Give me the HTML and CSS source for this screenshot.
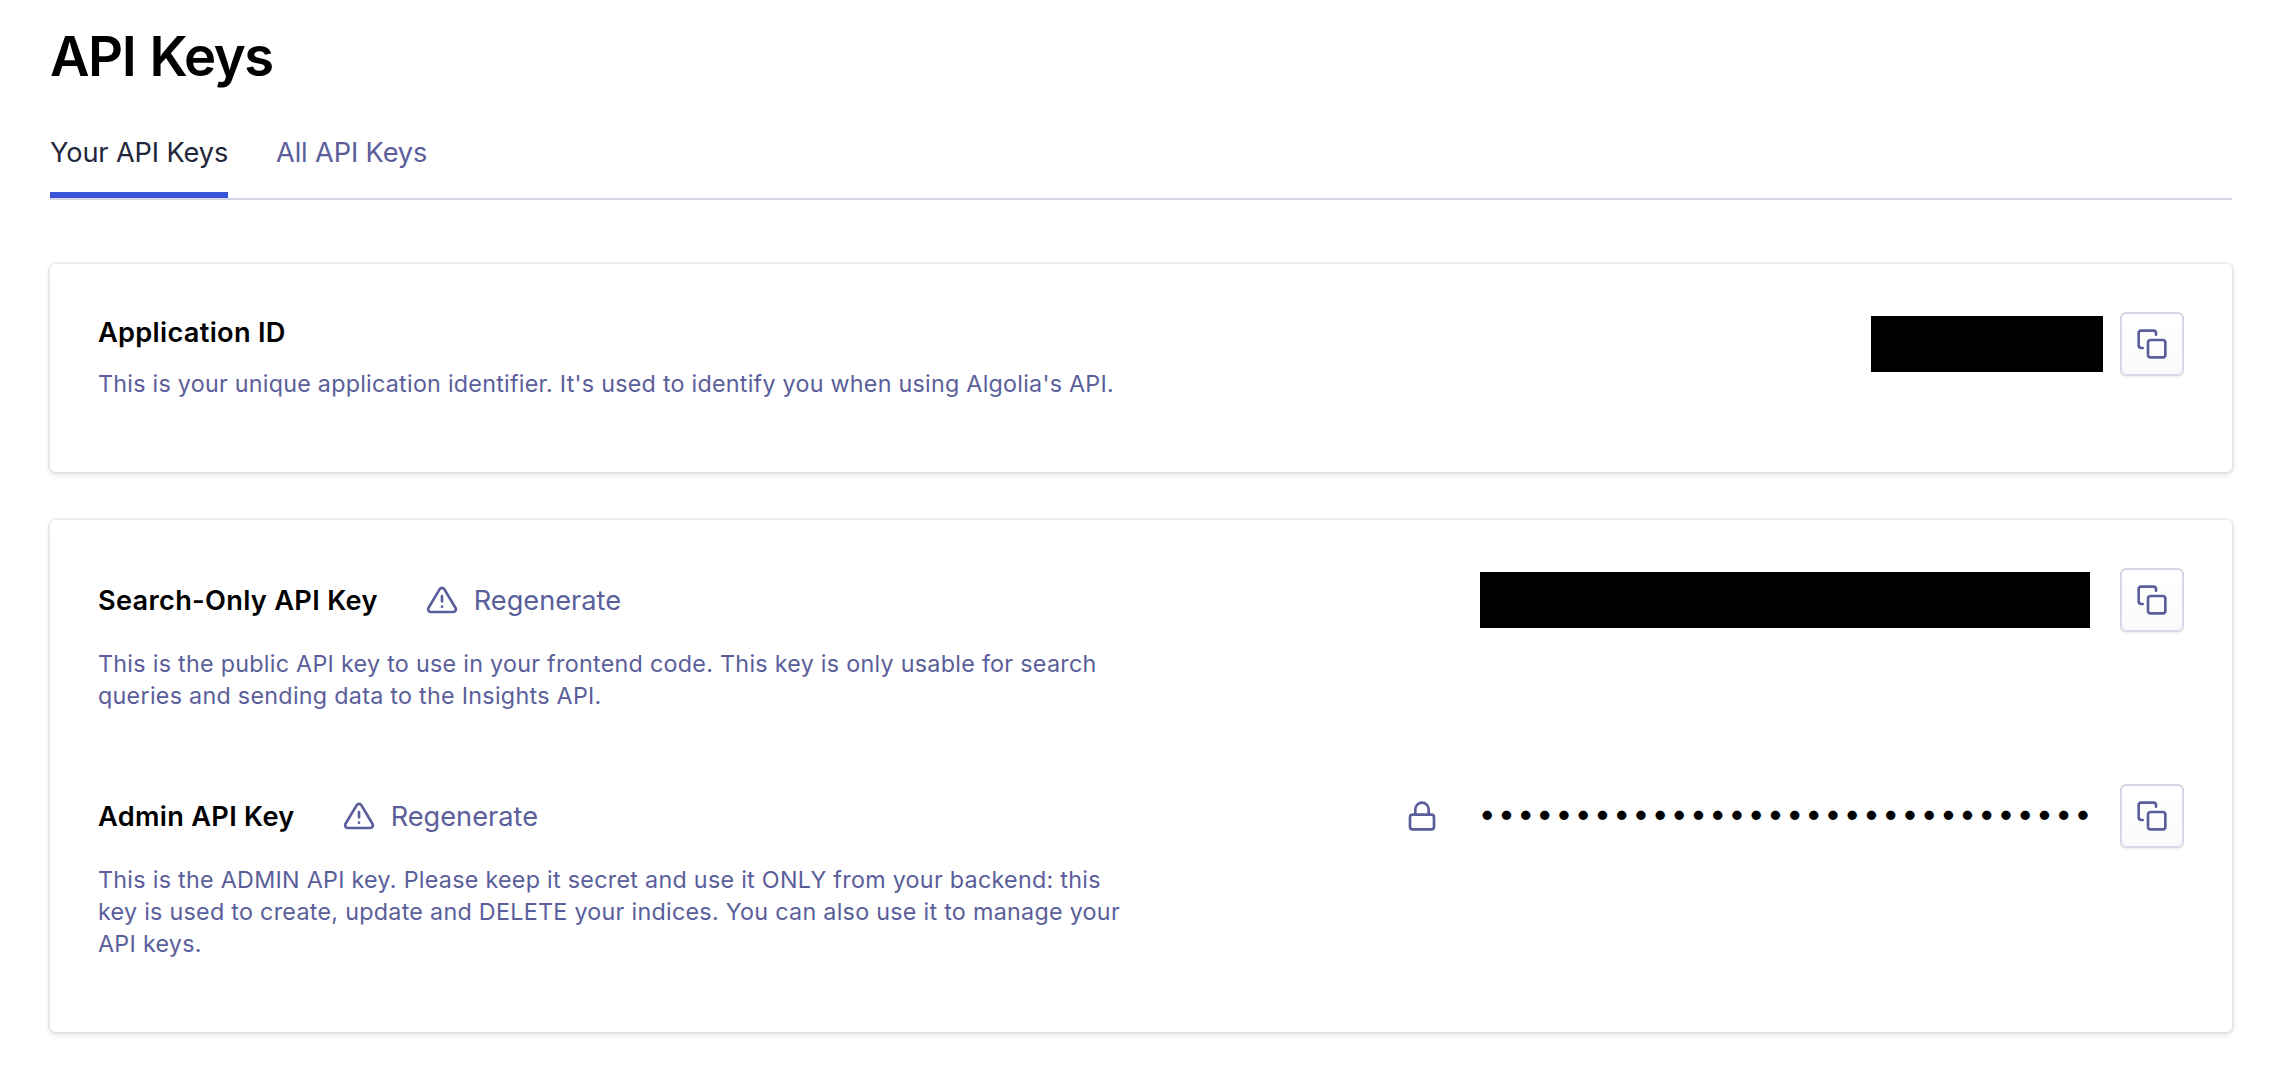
FILE: index.html
```
<!DOCTYPE html>
<html lang="en">
<head>
<meta charset="utf-8">
<title>API Keys</title>
<link rel="stylesheet" href="styles.css">
</head>
<body>
<svg class="sprite" aria-hidden="true">
  <symbol id="copy" viewBox="0 0 24 24"><rect x="9" y="9" width="13" height="13" rx="2"/><path d="M5 15H4a2 2 0 0 1-2-2V4a2 2 0 0 1 2-2h9a2 2 0 0 1 2 2v1"/></symbol>
  <symbol id="alert" viewBox="0 0 24 24"><path d="M10.29 3.86 1.82 18a2 2 0 0 0 1.71 3h16.94a2 2 0 0 0 1.71-3L13.71 3.86a2 2 0 0 0-3.42 0z"/><path d="M12 9v4M12 17h.01"/></symbol>
  <symbol id="lock" viewBox="0 0 24 24"><rect x="3" y="11" width="18" height="11" rx="2"/><path d="M7 11V7a5 5 0 0 1 10 0v4"/></symbol>
</svg>
<main class="page">
  <h1 class="title">API Keys</h1>
  <nav class="tabs">
    <a class="tab tab-active">Your API Keys</a>
    <a class="tab">All API Keys</a>
  </nav>

  <section class="card card-app">
    <div class="row">
      <div class="info">
        <h2 class="name">Application ID</h2>
        <p class="desc">This is your unique application identifier. It's used to identify you when using Algolia's API.</p>
      </div>
      <div class="value">
        <span class="redacted redacted-id"></span>
        <button class="copy" aria-label="Copy"><svg class="icon"><use href="#copy"/></svg></button>
      </div>
    </div>
  </section>

  <section class="card card-keys">
    <div class="row">
      <div class="info">
        <div class="heading">
          <h2 class="name">Search-Only API Key</h2>
          <a class="regen"><svg class="icon"><use href="#alert"/></svg><span class="regen-label">Regenerate</span></a>
        </div>
        <p class="desc">This is the public API key to use in your frontend code. This key is only usable for search<br>queries and sending data to the Insights API.</p>
      </div>
      <div class="value">
        <span class="redacted redacted-key"></span>
        <button class="copy" aria-label="Copy"><svg class="icon"><use href="#copy"/></svg></button>
      </div>
    </div>
    <div class="row">
      <div class="info">
        <div class="heading">
          <h2 class="name">Admin API Key</h2>
          <a class="regen"><svg class="icon"><use href="#alert"/></svg><span class="regen-label">Regenerate</span></a>
        </div>
        <p class="desc">This is the ADMIN API key. Please keep it secret and use it ONLY from your backend: this<br>key is used to create, update and DELETE your indices. You can also use it to manage your<br>API keys.</p>
      </div>
      <div class="value">
        <svg class="icon lock"><use href="#lock"/></svg>
        <span class="dots">••••••••••••••••••••••••••••••••</span>
        <button class="copy" aria-label="Copy"><svg class="icon"><use href="#copy"/></svg></button>
      </div>
    </div>
  </section>
</main>
</body>
</html>
```
FILE: styles.css
```
* { box-sizing: border-box; }

body {
  min-height: 1070px;
  margin: 0;
  background: #fff;
  color: #000;
  font-family: Inter, "Liberation Sans", sans-serif;
}

.sprite { display: none; }

.page { padding: 24px 38px 0 50px; }

.title {
  margin: 0;
  font-size: 54.4px;
  font-weight: 600;
  line-height: 64px;
  letter-spacing: -1.5px;
  word-spacing: 2px;
}

.tabs {
  display: flex;
  gap: 48px;
  height: 88px;
  margin-top: 24px;
  border-bottom: 2px solid #d6d6e7;
}

.tab {
  padding-top: 21px;
  color: #5a5e9a;
  font-size: 27.2px;
  letter-spacing: -0.13px;
  line-height: 40px;
}

.tab-active {
  width: 178px;
  color: #23263b;
  white-space: nowrap;
  border-bottom: 6px solid #3855d9;
}

.card {
  padding: 48px;
  border-radius: 6px;
  box-shadow: 0 0 0 2px rgba(35, 38, 59, 0.05), 0 2px 6px rgba(35, 38, 59, 0.15);
}

.card-app { height: 208px; margin-top: 64px; }
.card-keys { height: 512px; margin-top: 48px; }

.row { display: flex; justify-content: space-between; }
.card-keys .row:first-child { height: 216px; }

.heading { display: flex; align-items: center; gap: 48px; height: 64px; }

.name {
  margin: 0;
  padding-top: 1px;
  font-size: 27.2px;
  font-weight: 600;
  letter-spacing: 0.3px;
  line-height: 40px;
}
.heading .name, .regen-label { padding-top: 2px; }

.regen {
  display: flex;
  align-items: center;
  gap: 16px;
  color: #5a5e9a;
  font-size: 27.2px;
  letter-spacing: 0;
  line-height: 40px;
}

.desc {
  margin: 16px 0 0;
  color: #5a5e9a;
  font-size: 23.3px;
  letter-spacing: 0.28px;
  line-height: 32px;
  white-space: nowrap;
}
.card-app .desc { margin-top: 15px; letter-spacing: 0.25px; }

.value { display: flex; align-items: center; height: 64px; }

.redacted { height: 56px; background: #000; }
.redacted-id { width: 232px; margin-right: 17px; }
.redacted-key { width: 610px; margin-right: 30px; }

.copy {
  display: flex;
  align-items: center;
  justify-content: center;
  width: 64px;
  height: 64px;
  padding: 0;
  border: 2px solid #d6d6e7;
  border-radius: 6px;
  background: linear-gradient(#fff, #fafafb);
  box-shadow: 0 2px 0 rgba(35, 38, 59, 0.05);
}

.icon {
  width: 32px;
  height: 32px;
  fill: none;
  stroke: #5a5e9a;
  stroke-width: 2;
  stroke-linecap: round;
  stroke-linejoin: round;
}

.lock { margin-right: 41px; }
.dots { margin-right: 26.4px; padding-bottom: 6px; font-size: 30px; letter-spacing: 2.34px; line-height: 40px; }
```
